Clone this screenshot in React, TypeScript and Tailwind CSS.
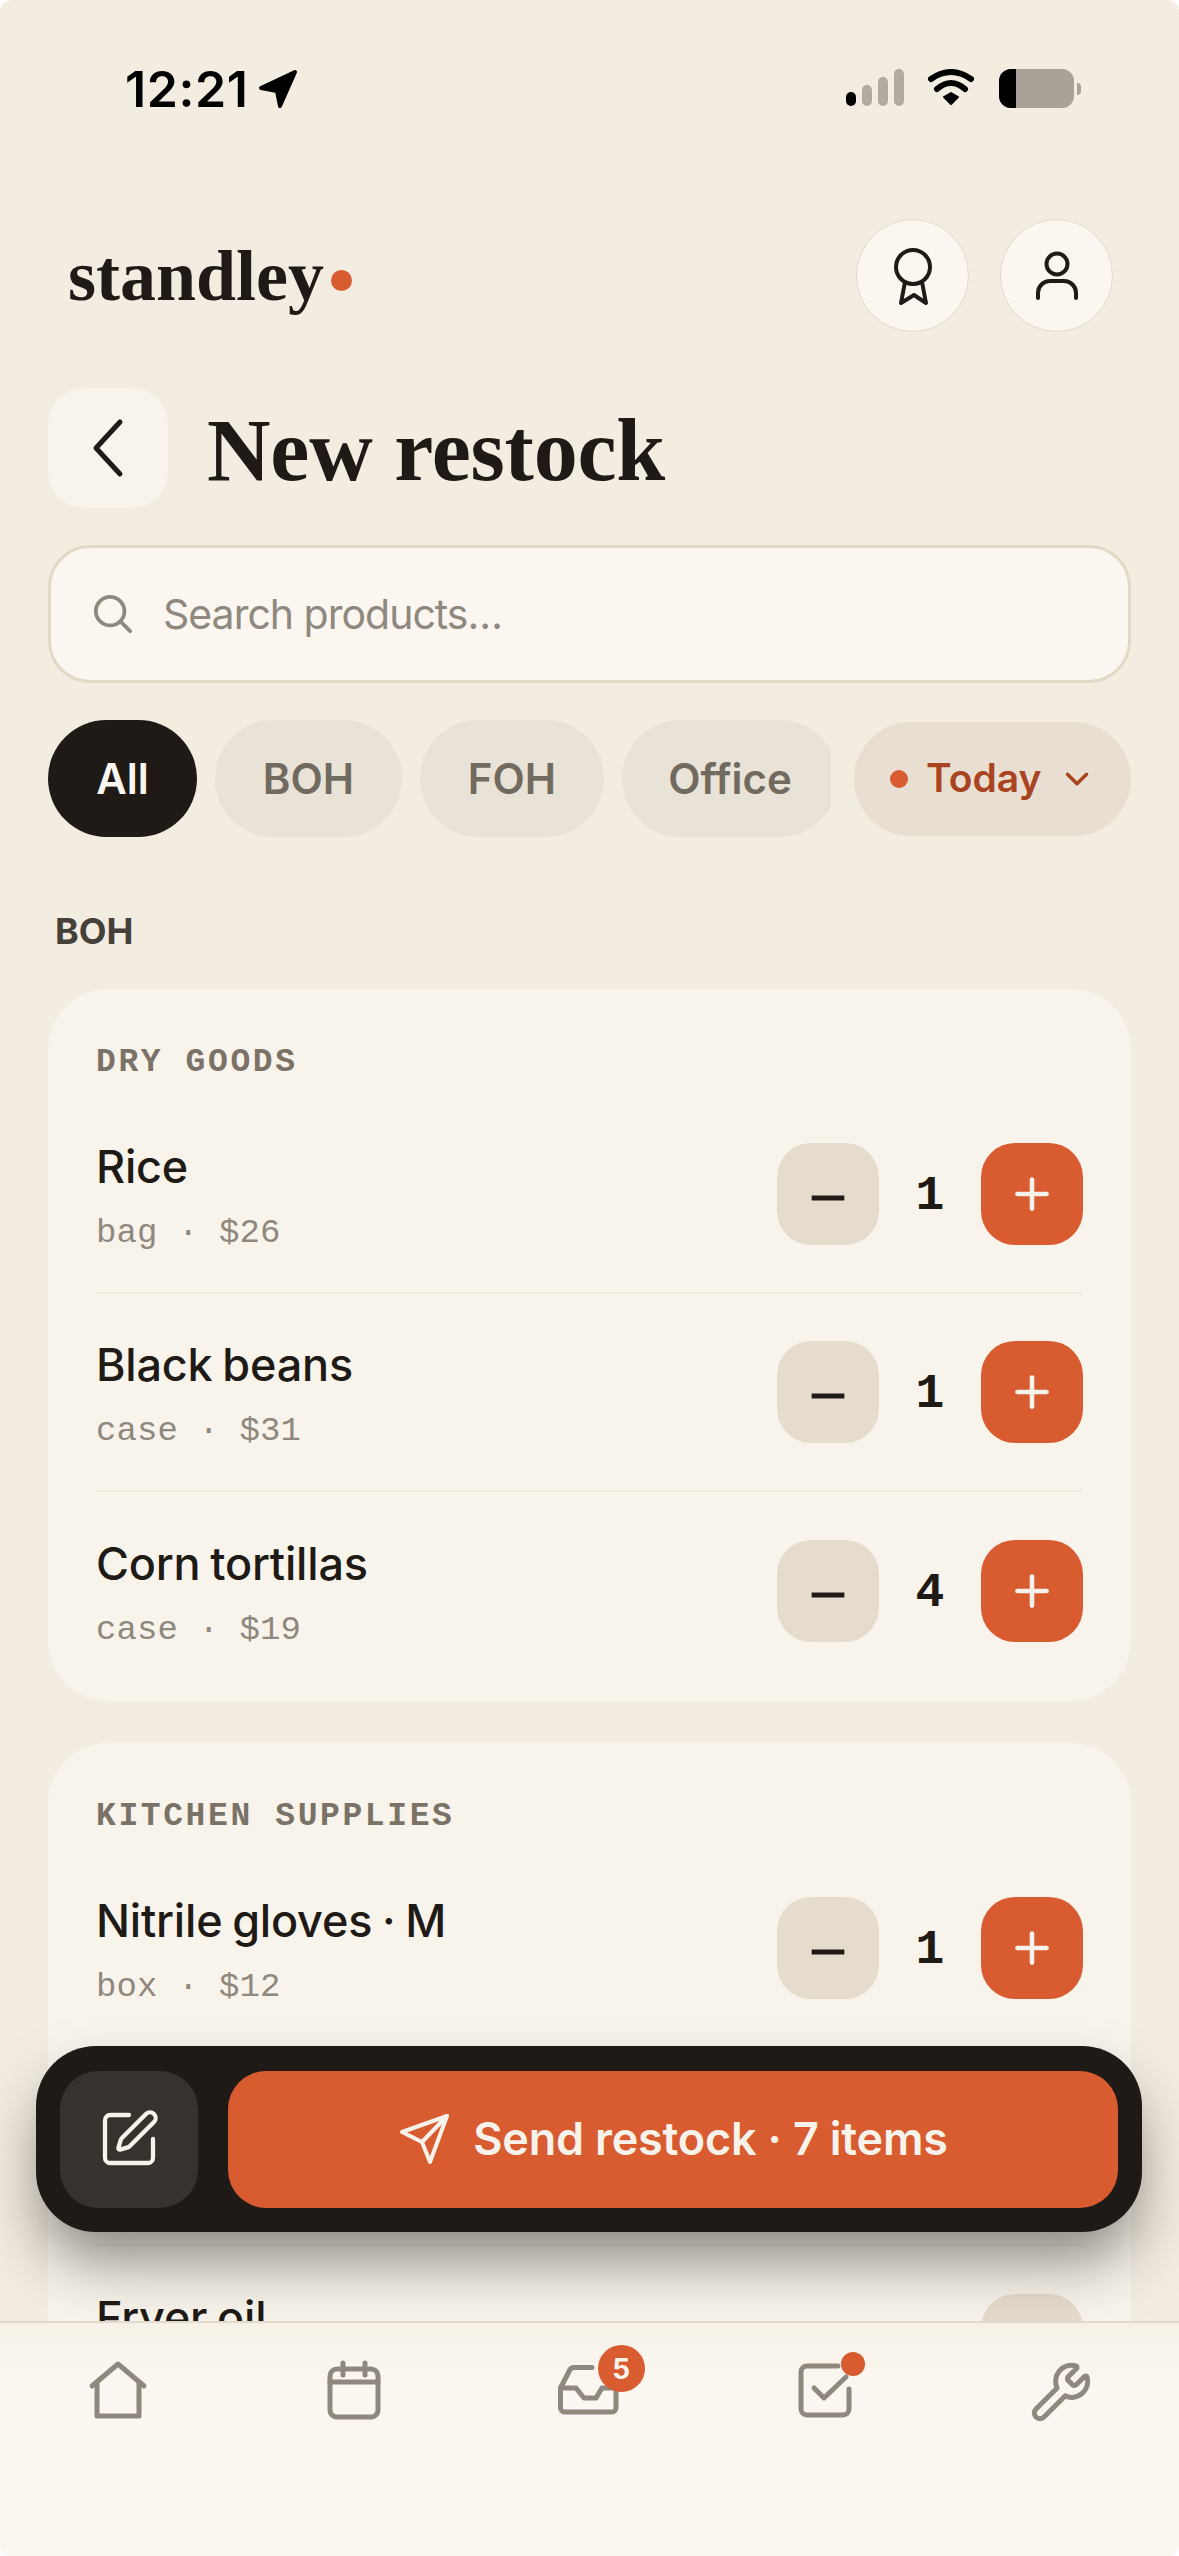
import { ChevronDown, Minus, Plus, SquarePen, Wrench } from 'lucide-react';

const SANS = "font-['Inter','Liberation_Sans',sans-serif]";
const SERIF = "font-['Liberation_Serif',serif]";
const MONO = "font-['Liberation_Mono',monospace]";

interface Product {
  name: string;
  meta?: string;
  qty?: number;
}

const dryGoods: Product[] = [
  { name: 'Rice', meta: 'bag · $26', qty: 1 },
  { name: 'Black beans', meta: 'case · $31', qty: 1 },
  { name: 'Corn tortillas', meta: 'case · $19', qty: 4 },
];

function StatusBar() {
  return (
    <div className="flex h-[219px] shrink-0 items-start justify-between pl-[125px] pr-[98px] pt-[69px]">
      <div className="flex items-center gap-[9px] text-black">
        <span className="text-[50px] font-semibold leading-[38px] tracking-[0.6px]">12:21</span>
        <svg width="40" height="40" viewBox="0 0 40 40" className="text-black">
          <path d="M37 3 L3 19 L19 22 L22 37 Z" fill="currentColor" stroke="currentColor" strokeWidth="4" strokeLinejoin="round" />
        </svg>
      </div>
      <div className="flex items-start">
        <svg width="60" height="38" viewBox="0 0 60 38">
          <rect x="1" y="23" width="10" height="14" rx="5" fill="#000" />
          <rect x="17" y="16" width="10" height="21" rx="5" fill="#b0aaa1" />
          <rect x="33" y="8" width="10" height="29" rx="5" fill="#b0aaa1" />
          <rect x="49" y="0" width="10" height="37" rx="5" fill="#b0aaa1" />
        </svg>
        <svg width="50" height="38" viewBox="0 0 50 38" className="ml-[21px]">
          <path d="M5 10 Q25 -4 45 10" fill="none" stroke="#000" strokeWidth="6" strokeLinecap="round" />
          <path d="M11 20 Q25 8 39 20" fill="none" stroke="#000" strokeWidth="6" strokeLinecap="round" />
          <path d="M18 28 L25 24 L32 28 L25 35 Z" fill="#000" stroke="#000" strokeWidth="2" strokeLinejoin="round" />
        </svg>
        <div className="ml-[23px] flex items-center">
          <div className="flex h-[39px] w-[75px] overflow-hidden rounded-[12px] bg-[#a9a298]">
            <div className="h-full w-[17px] bg-black" />
          </div>
          <div className="ml-[3px] h-[12px] w-[4px] rounded-r-full bg-[#a9a298]" />
        </div>
      </div>
    </div>
  );
}

function Header() {
  return (
    <div className="flex h-[113px] shrink-0 items-center justify-between pl-[68px] pr-[66px]">
      <div className="flex items-center gap-[7px]">
        <span className={`${SERIF} text-[72px] font-bold leading-none text-[#201a17]`}>standley</span>
        <span className="mt-[10px] h-[21px] w-[21px] rounded-full bg-[#d95b30]" />
      </div>
      <div className="flex gap-[31px]">
        <button className="flex h-[113px] w-[113px] items-center justify-center rounded-full border border-[#e2d9ca] bg-[#fbf7f0]">
          <svg width="60" height="60" viewBox="0 0 60 60" fill="none" stroke="#201a17" strokeWidth="4" strokeLinecap="round" strokeLinejoin="round">
            <circle cx="30" cy="21" r="17" />
            <path d="M22 36 L18 57 L31 49 L43 57 L39 36" />
          </svg>
        </button>
        <button className="flex h-[113px] w-[113px] items-center justify-center rounded-full border border-[#e2d9ca] bg-[#fbf7f0]">
          <svg width="60" height="60" viewBox="0 0 60 60" fill="none" stroke="#201a17" strokeWidth="4" strokeLinecap="round" strokeLinejoin="round">
            <circle cx="30" cy="18" r="10.5" />
            <path d="M11 52 v-5 a12 12 0 0 1 12-12 h14 a12 12 0 0 1 12 12 v5" />
          </svg>
        </button>
      </div>
    </div>
  );
}

function Stepper({ qty }: { qty?: number }) {
  // items that are not in the order yet only show the add button, in beige
  if (qty == null) {
    return (
      <button className="flex h-[102px] w-[102px] shrink-0 items-center justify-center rounded-[34px] bg-[#e6dccd] text-[#201a17]">
        <Plus size={50} strokeWidth={2.2} />
      </button>
    );
  }
  return (
    <div className="flex shrink-0 items-center">
      <button className="flex h-[102px] w-[102px] items-center justify-center rounded-[34px] bg-[#e6dccd] text-[#201a17]">
        <Minus size={56} strokeWidth={2.2} strokeLinecap="butt" className="translate-y-[4px]" />
      </button>
      <span className={`${MONO} w-[102px] translate-y-[2px] text-center text-[48px] font-bold leading-none text-[#201a17]`}>{qty}</span>
      <button className="flex h-[102px] w-[102px] items-center justify-center rounded-[34px] bg-[#d95b30] text-[#f7f3ea]">
        <Plus size={50} strokeWidth={2.2} />
      </button>
    </div>
  );
}

function ProductRow({ product, last }: { product: Product; last?: boolean }) {
  return (
    <div className={`flex h-[198px] items-center justify-between ${last ? '' : 'border-b-2 border-[#f0eadf]'}`}>
      <div className="mt-[5px] flex flex-col">
        <span className="text-[45px] font-medium leading-[52px] tracking-[-0.2px] [word-spacing:-2px] text-[#201a17]">{product.name}</span>
        <span className={`${MONO} mt-[20px] h-[40px] whitespace-pre text-[34px] leading-[40px] tracking-[0.1px] text-[#8f887e]`}>{product.meta}</span>
      </div>
      <Stepper qty={product.qty} />
    </div>
  );
}

function CategoryTitle({ children }: { children: string }) {
  return (
    <div className={`${MONO} mb-[10px] h-[46px] text-[33px] font-bold leading-[46px] tracking-[2.6px] text-[#7a7266]`}>{children}</div>
  );
}

function Pills() {
  const pillClass = 'flex h-[117px] shrink-0 items-center justify-center rounded-full text-[42px] font-semibold';
  return (
    <div className="mx-[48px] mt-[37px] flex shrink-0 items-center justify-between">
      <div className="flex w-[783px] gap-[18px] overflow-hidden">
        <div className={`${pillClass} w-[149px] bg-[#201a17] text-[#fbf7f0]`}>All</div>
        <div className={`${pillClass} w-[187px] bg-[#e9e2d6] text-[#716a5f]`}>BOH</div>
        <div className={`${pillClass} w-[184px] bg-[#e9e2d6] text-[#716a5f]`}>FOH</div>
        <div className={`${pillClass} w-[216px] bg-[#e9e2d6] text-[#716a5f]`}>Office</div>
      </div>
      <div className="flex h-[114px] w-[277px] items-center rounded-full bg-[#e8dfd2] pl-[36px] text-[39px] font-semibold text-[#a8441f]">
        <span className="h-[18px] w-[18px] rounded-full bg-[#d95b30]" />
        <span className="ml-[18px]">Today</span>
        <ChevronDown size={38} strokeWidth={2.2} className="ml-[17px]" />
      </div>
    </div>
  );
}

function ActionBar() {
  return (
    <div className="absolute left-[36px] top-[2046px] flex h-[186px] w-[1106px] items-center gap-[30px] rounded-[60px] bg-[#201a17] px-[24px] shadow-[0_34px_60px_-6px_rgba(32,26,23,0.5)]">
      <button className="flex h-[137px] w-[138px] shrink-0 items-center justify-center rounded-[38px] bg-[#38322e] text-[#f7f3ea]">
        <SquarePen size={64} strokeWidth={1.6} />
      </button>
      <button className="flex h-[137px] flex-1 items-center justify-center gap-[21px] rounded-[38px] bg-[#d95b30] text-[45px] font-semibold tracking-[-0.2px] text-[#f7f3ea]">
        <svg width="54" height="54" viewBox="0 0 54 54" fill="none" stroke="#f7f3ea" strokeWidth="4" strokeLinejoin="round" strokeLinecap="round">
          <path d="M49 4 L4 20 L24 30 L32 50 Z" />
          <path d="M24 30 L49 4" />
        </svg>
        <span>Send restock · 7 items</span>
      </button>
    </div>
  );
}

function BottomNav() {
  const stroke = {
    fill: 'none',
    stroke: '#8f887e',
    strokeWidth: 5,
    strokeLinecap: 'round',
    strokeLinejoin: 'round',
  } as const;
  return (
    <nav className="absolute bottom-0 left-0 right-0 top-[2321px] grid grid-cols-5 items-start border-t-2 border-[#e2d9ca] bg-gradient-to-b from-[#f6f1e7] to-[#fbf7f0] to-[60px] pt-[37px]">
      <div className="flex justify-center">
        <svg width="60" height="60" viewBox="0 0 60 60" {...stroke}>
          <path d="M4 26 L30 4 L56 26" />
          <path d="M9 22 V56 H51 V22" />
        </svg>
      </div>
      <div className="flex justify-center">
        <svg width="60" height="60" viewBox="0 0 60 60" {...stroke}>
          <rect x="6" y="9" width="48" height="48" rx="7" />
          <path d="M6 22 H54 M19 3 V15 M41 3 V15" />
        </svg>
      </div>
      <div className="relative flex justify-center">
        <svg width="70" height="60" viewBox="0 0 70 60" {...stroke}>
          <path d="M38 7.5 H20 a5 5 0 0 0 -4.5 3 L6.5 28 V48 a4 4 0 0 0 4 4 H58 a4 4 0 0 0 4 -4 V28" />
          <path d="M6.5 28 H22 L30 38 H42 L48 28 H62" />
        </svg>
        <span className="absolute left-[126px] top-[-15px] flex h-[47px] w-[47px] items-center justify-center rounded-full bg-[#d95b30] text-[28px] font-bold text-[#f7f3ea]">
          5
        </span>
      </div>
      <div className="relative flex justify-center">
        <svg width="60" height="60" viewBox="0 0 60 60" {...stroke}>
          <path d="M43 6 H12 a6 6 0 0 0 -6 6 V49 a6 6 0 0 0 6 6 H48 a6 6 0 0 0 6 -6 V29" />
          <path d="M19 28 L29 38 L51 17" />
        </svg>
        <span className="absolute left-[134px] top-[-8px] h-[24px] w-[24px] rounded-full bg-[#d95b30]" />
      </div>
      <div className="flex justify-center text-[#8f887e]">
        <Wrench size={64} strokeWidth={1.9} />
      </div>
    </nav>
  );
}

export default function App() {
  return (
    <div className={`${SANS} relative flex h-[2556px] w-[1179px] flex-col overflow-hidden rounded-[12px] bg-[#f2ece1]`}>
      <StatusBar />
      <Header />

      <div className="mx-[48px] mt-[56px] flex h-[120px] shrink-0 items-center gap-[39px]">
        <button className="flex h-[120px] w-[120px] shrink-0 items-center justify-center rounded-[36px] bg-[#f8f4eb] text-[#201a17]">
          <svg width="40" height="60" viewBox="0 0 40 60" fill="none" stroke="currentColor" strokeWidth="5" strokeLinecap="round" strokeLinejoin="round">
            <path d="M32 4 L8 30 L32 56" />
          </svg>
        </button>
        <h1 className={`${SERIF} mt-[6px] text-[88px] font-bold leading-none tracking-[-0.2px] text-[#201a17]`}>New restock</h1>
      </div>

      <div className="mx-[48px] mt-[37px] flex h-[138px] shrink-0 items-center gap-[30px] rounded-[42px] border-[3px] border-[#e2d8c6] bg-[#fbf7f0] pl-[42px]">
        <svg width="40" height="40" viewBox="0 0 42 42" fill="none" stroke="#8f887e" strokeWidth="4" strokeLinecap="round">
          <circle cx="18" cy="18" r="15" />
          <path d="M29 29 L39 39" />
        </svg>
        <span className="text-[41px] leading-none tracking-[-1px] text-[#8f887e]">Search products…</span>
      </div>

      <Pills />

      <div className="ml-[55px] mt-[74px] h-[40px] shrink-0 text-[36px] font-bold leading-[40px] text-[#46403a]">BOH</div>

      <section className="mx-[48px] mt-[38px] shrink-0 rounded-[60px] bg-[#f8f4eb] px-[48px] pb-[11px] pt-[51px]">
        <CategoryTitle>DRY GOODS</CategoryTitle>
        {dryGoods.map((p, i) => (
          <ProductRow key={p.name} product={p} last={i === dryGoods.length - 1} />
        ))}
      </section>

      <section className="mx-[48px] mt-[42px] shrink-0 rounded-[60px] bg-[#f8f4eb] px-[48px] pb-[11px] pt-[51px]">
        <CategoryTitle>KITCHEN SUPPLIES</CategoryTitle>
        <ProductRow product={{ name: 'Nitrile gloves · M', meta: 'box · $12', qty: 1 }} />
        {/* this row sits fully behind the action bar */}
        <div className="h-[198px] border-b-2 border-[#f0eadf]" />
        <ProductRow product={{ name: 'Fryer oil' }} last />
      </section>

      <ActionBar />
      <BottomNav />
    </div>
  );
}
